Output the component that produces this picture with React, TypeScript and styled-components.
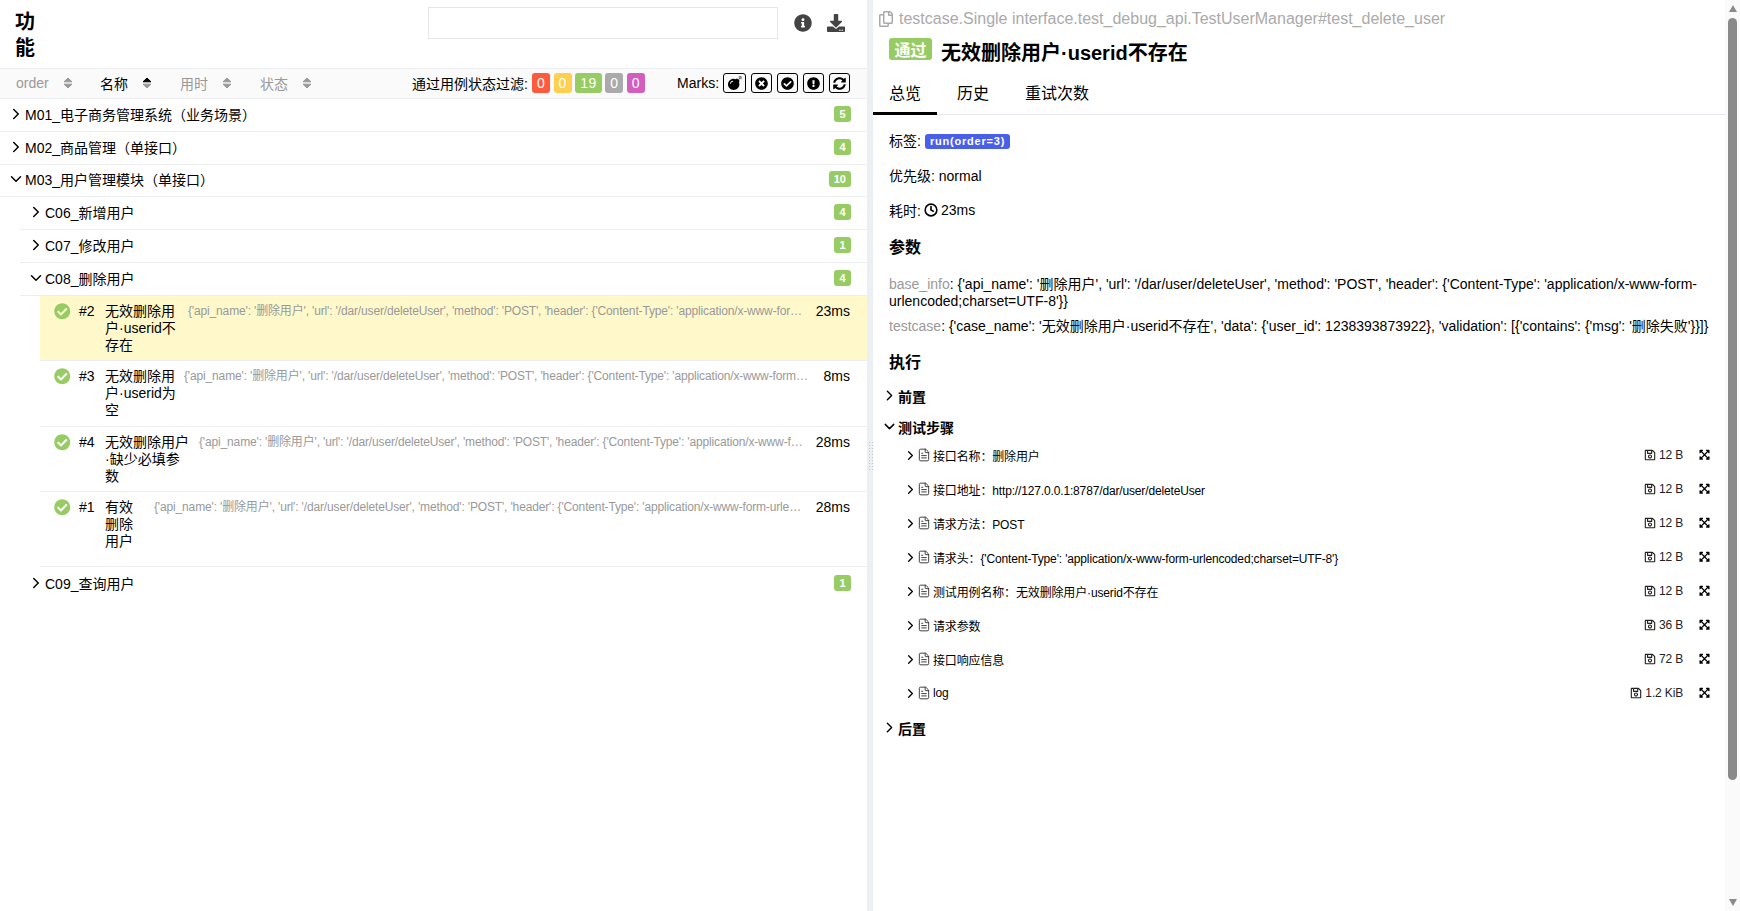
import React, { FC } from "react";
import styled, { createGlobalStyle } from "styled-components";
import { ChevronDown, ChevronRight, Clock, FileText } from "lucide-react";
import {
  FaBomb,
  FaCheckCircle,
  FaDownload,
  FaExclamationCircle,
  FaExpandArrowsAlt,
  FaInfoCircle,
  FaRegCopy,
  FaRegSave,
  FaSyncAlt,
  FaTimesCircle,
} from "react-icons/fa";

const PARAM_TEXT =
  "{'api_name': '删除用户', 'url': '/dar/user/deleteUser', 'method': 'POST', 'header': {'Content-Type': 'application/x-www-form-urlencoded;charset=UTF-8'}}";

const GlobalStyle = createGlobalStyle`
  html, body {
    margin: 0;
    height: 100%;
    overflow: hidden;
    background: #fff;
  }
  body {
    font-family: "Liberation Sans", "Noto Sans CJK SC", sans-serif;
    font-size: 14px;
    color: #000;
  }
`;

const sorters = [
  { label: "order", width: 84, active: false },
  { label: "名称", width: 80, active: true },
  { label: "用时", width: 80, active: false },
  { label: "状态", width: 80, active: false },
];

const filters = [
  { value: 0, color: "#fd5a3e" },
  { value: 0, color: "#ffd050" },
  { value: 19, color: "#97cc64" },
  { value: 0, color: "#aaaaaa" },
  { value: 0, color: "#d35ebe" },
];

const marks = [FaBomb, FaTimesCircle, FaCheckCircle, FaExclamationCircle, FaSyncAlt];

const cases = [
  { id: "#2", name: "无效删除用户·userid不存在", nameWidth: 71, gap: 12, duration: "23ms", height: 65.5, selected: true },
  { id: "#3", name: "无效删除用户·userid为空", nameWidth: 71, gap: 8, duration: "8ms", height: 65.5, selected: false },
  { id: "#4", name: "无效删除用户·缺少必填参数", nameWidth: 84, gap: 10, duration: "28ms", height: 65.5, selected: false },
  { id: "#1", name: "有效删除用户", nameWidth: 30, gap: 19, duration: "28ms", height: 75, selected: false },
];

const steps = [
  { name: "接口名称：删除用户", size: "12 B" },
  { name: "接口地址：http://127.0.0.1:8787/dar/user/deleteUser", size: "12 B" },
  { name: "请求方法：POST", size: "12 B" },
  { name: "请求头：{'Content-Type': 'application/x-www-form-urlencoded;charset=UTF-8'}", size: "12 B" },
  { name: "测试用例名称：无效删除用户·userid不存在", size: "12 B" },
  { name: "请求参数", size: "36 B" },
  { name: "接口响应信息", size: "72 B" },
  { name: "log", size: "1.2 KiB" },
];

const SortIcon: FC<{ active: boolean }> = ({ active }) => (
  <svg width="10" height="12" viewBox="0 0 10 12">
    <path d="M5 1 L9 4.8 H1 Z" fill={active ? "#000" : "#999"} stroke={active ? "#000" : "#999"} strokeLinejoin="round" />
    <path d="M5 11 L9 7.2 H1 Z" fill="#999" stroke="#999" strokeLinejoin="round" />
  </svg>
);

const Group: FC<{ label: string; count: number; open?: boolean; child?: boolean; last?: boolean }> = ({
  label,
  count,
  open,
  child,
  last,
}) => (
  <GroupRow $child={child} $last={last}>
    <Caret>{open ? <ChevronDown size={18} /> : <ChevronRight size={18} />}</Caret>
    <GroupLabel>{label}</GroupLabel>
    <CountBadge>{count}</CountBadge>
  </GroupRow>
);

const App: FC = () => {
  return (
    <Page>
      <GlobalStyle />
      <LeftPane>
        <Header>
          <PageTitle>功能</PageTitle>
          <SearchBox />
          <HeaderIcon>
            <FaInfoCircle />
          </HeaderIcon>
          <HeaderIcon>
            <FaDownload />
          </HeaderIcon>
        </Header>
        <SortBar>
          {sorters.map((s) => (
            <Sorter key={s.label} $width={s.width} $active={s.active}>
              {s.label}
              <SortIcon active={s.active} />
            </Sorter>
          ))}
          <FilterLabel>通过用例状态过滤:</FilterLabel>
          <FilterList>
            {filters.map((f) => (
              <FilterBadge key={f.color} $color={f.color}>
                {f.value}
              </FilterBadge>
            ))}
          </FilterList>
          <MarksLabel>Marks:</MarksLabel>
          <MarkList>
            {marks.map((Icon, i) => (
              <MarkButton key={i}>
                <Icon />
              </MarkButton>
            ))}
          </MarkList>
        </SortBar>
        <Group label="M01_电子商务管理系统（业务场景）" count={5} />
        <Group label="M02_商品管理（单接口）" count={4} />
        <Group label="M03_用户管理模块（单接口）" count={10} open />
        <Group label="C06_新增用户" count={4} child />
        <Group label="C07_修改用户" count={1} child />
        <Group label="C08_删除用户" count={4} child open />
        <CaseList>
          {cases.map((c) => (
            <CaseRow key={c.id} $selected={c.selected} $height={c.height}>
              <PassIcon>
                <FaCheckCircle />
              </PassIcon>
              <CaseId>{c.id}</CaseId>
              <CaseName $width={c.nameWidth}>{c.name}</CaseName>
              <CaseParams $gap={c.gap}>{PARAM_TEXT}</CaseParams>
              <CaseTime>{c.duration}</CaseTime>
            </CaseRow>
          ))}
        </CaseList>
        <Group label="C09_查询用户" count={1} child last />
      </LeftPane>

      <Splitter>
        <Grip />
      </Splitter>

      <RightPane>
        <FullName>
          <CopyIcon>
            <FaRegCopy />
          </CopyIcon>
          testcase.Single interface.test_debug_api.TestUserManager#test_delete_user
        </FullName>
        <TitleRow>
          <StatusBadge>通过</StatusBadge>
          <CaseTitle>无效删除用户·userid不存在</CaseTitle>
        </TitleRow>
        <Tabs>
          <Tab $active>总览</Tab>
          <Tab>历史</Tab>
          <Tab>重试次数</Tab>
        </Tabs>
        <Body>
          <InfoLine>
            标签: <TagBadge>run(order=3)</TagBadge>
          </InfoLine>
          <InfoLine>优先级: normal</InfoLine>
          <InfoLine>
            耗时: <Clock size={14} strokeWidth={2.8} /> 23ms
          </InfoLine>
          <SectionTitle>参数</SectionTitle>
          <ParamLine>
            <ParamKey>base_info</ParamKey>: {PARAM_TEXT}
          </ParamLine>
          <ParamLine>
            <ParamKey>testcase</ParamKey>: {"{'case_name': '无效删除用户·userid不存在', 'data': {'user_id': 1238393873922}, 'validation': [{'contains': {'msg': '删除失败'}}]}"}
          </ParamLine>
          <ExecTitle>执行</ExecTitle>
          <StageRow>
            <StageCaret><ChevronRight size={17} /></StageCaret>
            前置
          </StageRow>
          <StageRow>
            <StageCaret><ChevronDown size={17} /></StageCaret>
            测试步骤
          </StageRow>
          <StepList>
            {steps.map((s) => (
              <StepRow key={s.name}>
                <StepCaret><ChevronRight size={15} /></StepCaret>
                <StepFile><FileText size={14} strokeWidth={1.6} /></StepFile>
                <StepName>{s.name}</StepName>
                <StepSize>
                  <FaRegSave />
                  {s.size}
                </StepSize>
                <StepExpand><FaExpandArrowsAlt /></StepExpand>
              </StepRow>
            ))}
          </StepList>
          <StageRow>
            <StageCaret><ChevronRight size={17} /></StageCaret>
            后置
          </StageRow>
        </Body>
      </RightPane>

      <ScrollTrack>
        <ArrowUp />
        <ScrollThumb />
        <ArrowDown />
      </ScrollTrack>
    </Page>
  );
};

export default App;

const Page = styled.div`
  display: flex;
  width: 1740px;
  height: 911px;
  overflow: hidden;
`;

const LeftPane = styled.div`
  width: 867px;
  flex: none;
  display: flex;
  flex-direction: column;
`;

const Header = styled.div`
  height: 69px;
  box-sizing: border-box;
  flex: none;
  display: flex;
  align-items: flex-start;
  border-bottom: 1px solid #eceef1;
`;

const PageTitle = styled.h2`
  width: 20px;
  margin: 9px 0 0 15px;
  font-size: 20px;
  line-height: 26px;
  font-weight: bold;
`;

const SearchBox = styled.div`
  width: 348px;
  height: 30px;
  margin: 7px 0 0 393px;
  border: 1px solid #e4e7eb;
`;

const HeaderIcon = styled.span`
  width: 18px;
  height: 18px;
  margin: 14px 0 0 15px;
  font-size: 18px;
  color: #444;
  &:first-of-type {
    margin-left: 16px;
  }
`;

const SortBar = styled.div`
  height: 30px;
  box-sizing: border-box;
  flex: none;
  display: flex;
  align-items: center;
  padding: 0 0 1px 16px;
  background: #fafafa;
  border-bottom: 1px solid #eceef1;
`;

const Sorter = styled.div<{ $width: number; $active: boolean }>`
  width: ${(p) => p.$width}px;
  display: flex;
  align-items: center;
  gap: 14px;
  color: ${(p) => (p.$active ? "#000" : "#999")};
`;

const FilterLabel = styled.span`
  margin-left: 72px;
  white-space: nowrap;
`;

const FilterList = styled.div`
  display: flex;
  gap: 3.5px;
  margin-left: 4px;
`;

const FilterBadge = styled.span<{ $color: string }>`
  height: 20px;
  padding: 0 5px;
  display: flex;
  align-items: center;
  justify-content: center;
  border-radius: 3px;
  background: ${(p) => p.$color};
  color: #fff;
  font-size: 14px;
  letter-spacing: 0.4px;
`;

const MarksLabel = styled.span`
  margin-left: 32px;
`;

const MarkList = styled.div`
  display: flex;
  gap: 5px;
  margin-left: 4px;
`;

const MarkButton = styled.span`
  width: 19px;
  height: 18px;
  display: flex;
  align-items: center;
  justify-content: center;
  border: 1px solid #000;
  border-radius: 3px;
  font-size: 13px;
  &:first-child {
    width: 21px;
    font-size: 14px;
  }
`;

const GroupRow = styled.div<{ $child?: boolean; $last?: boolean }>`
  height: 32.8px;
  box-sizing: border-box;
  flex: none;
  display: flex;
  align-items: center;
  margin-left: ${(p) => (p.$child ? 20 : 0)}px;
  padding: 0 0 2px 10px;
  border-bottom: ${(p) => (p.$last ? "none" : "1px solid #eceef1")};
`;

const Caret = styled.span`
  width: 15px;
  height: 16px;
  display: flex;
  align-items: center;
  justify-content: center;
  margin-left: -2px;
  margin-right: 2px;
  svg {
    flex: none;
  }
`;

const GroupLabel = styled.span`
  flex: 1;
  white-space: nowrap;
`;

const CountBadge = styled.span`
  min-width: 7px;
  height: 16px;
  margin-right: 16px;
  padding: 0 5px;
  display: flex;
  align-items: center;
  justify-content: center;
  border-radius: 3px;
  background: #97cc64;
  color: #fff;
  font-size: 11px;
  font-weight: bold;
`;

const CaseList = styled.div`
  margin-left: 40px;
  flex: none;
`;

const CaseRow = styled.div<{ $selected: boolean; $height: number }>`
  height: ${(p) => p.$height}px;
  box-sizing: border-box;
  display: flex;
  align-items: flex-start;
  padding-top: 7px;
  background: ${(p) => (p.$selected ? "#fff8cb" : "#fff")};
  border-bottom: 1px solid #eceef1;
  line-height: 17px;
`;

const PassIcon = styled.span`
  width: 16px;
  height: 16px;
  margin-left: 14px;
  font-size: 16.5px;
  color: #97cc64;
  line-height: 16px;
`;

const CaseId = styled.span`
  width: 26px;
  margin-left: 9px;
`;

const CaseName = styled.span<{ $width: number }>`
  width: ${(p) => p.$width}px;
  flex: none;
  word-break: break-all;
`;

const CaseParams = styled.span<{ $gap: number }>`
  flex: 1;
  min-width: 0;
  margin-left: ${(p) => p.$gap}px;
  color: #999;
  font-size: 12px;
  letter-spacing: -0.15px;
  white-space: nowrap;
  overflow: hidden;
  text-overflow: ellipsis;
`;

const CaseTime = styled.span`
  flex: none;
  margin: 0 17px 0 13px;
  text-align: right;
`;

const Splitter = styled.div`
  width: 6px;
  flex: none;
  display: flex;
  align-items: center;
  justify-content: center;
  background: #ecf0f3;
`;

const Grip = styled.div`
  width: 5px;
  height: 30px;
  background-image: radial-gradient(#bfc4c9 1px, transparent 1px);
  background-size: 3px 3px;
`;

const RightPane = styled.div`
  flex: 1;
  min-width: 0;
  display: flex;
  flex-direction: column;
`;

const FullName = styled.div`
  display: flex;
  align-items: center;
  height: 18px;
  margin: 10px 0 0 5px;
  font-size: 16px;
  color: #aaa;
  white-space: nowrap;
`;

const CopyIcon = styled.span`
  display: flex;
  margin-right: 5px;
  font-size: 16px;
`;

const TitleRow = styled.div`
  display: flex;
  align-items: center;
  margin: 8px 0 0 16px;
  height: 30px;
`;

const StatusBadge = styled.span`
  width: 43px;
  height: 22px;
  display: flex;
  align-items: center;
  justify-content: center;
  margin-top: -4px;
  border-radius: 3px;
  background: #97cc64;
  color: #fff;
  font-size: 16px;
  font-weight: bold;
`;

const CaseTitle = styled.h2`
  margin: 0 0 0 9px;
  font-size: 20px;
  font-weight: bold;
`;

const Tabs = styled.div`
  display: flex;
  height: 44px;
  box-sizing: border-box;
  margin-top: 5px;
  border-bottom: 1px solid #e4e7eb;
`;

const Tab = styled.div<{ $active?: boolean }>`
  height: 44px;
  box-sizing: border-box;
  padding: 12px 16px 0;
  margin-right: 4px;
  font-size: 16px;
  border-bottom: ${(p) => (p.$active ? "3px solid #000" : "none")};
  line-height: 22px;
`;

const Body = styled.div`
  padding: 0 11px 0 16px;
  display: flex;
  flex-direction: column;
`;

const InfoLine = styled.div`
  height: 35.4px;
  display: flex;
  align-items: center;
  gap: 3px;
  &:first-child {
    margin-top: 7px;
  }
`;

const TagBadge = styled.span`
  display: inline-block;
  margin: 4px 0 0 1px;
  padding: 0 5px;
  height: 15px;
  line-height: 15px;
  border-radius: 3px;
  background: #4a5fe8;
  color: #fff;
  font-size: 11px;
  font-weight: bold;
  letter-spacing: 0.8px;
`;

const SectionTitle = styled.h3`
  margin: 9px 0 17px;
  font-size: 16px;
  line-height: 22px;
`;

const ExecTitle = styled(SectionTitle)`
  margin: 9px 0 6px;
`;

const ParamLine = styled.div`
  line-height: 17px;
  margin-bottom: 8px;
  padding-right: 5px;
`;

const ParamKey = styled.span`
  color: #999;
`;

const StageRow = styled.div`
  height: 31px;
  flex: none;
  display: flex;
  align-items: center;
  font-weight: bold;
  margin-left: -3px;
`;

const StageCaret = styled.span`
  display: flex;
  justify-content: center;
  width: 10px;
  margin: 0 4px 0 -2px;
  svg {
    flex: none;
  }
`;

const StepList = styled.div`
  display: flex;
  flex-direction: column;
  margin: -4px 0 2px;
`;

const StepRow = styled.div`
  height: 34px;
  flex: none;
  display: flex;
  align-items: center;
  padding-left: 14px;
  font-size: 12px;
`;

const StepCaret = styled.span`
  display: flex;
  justify-content: center;
  width: 14px;
  svg {
    flex: none;
  }
`;

const StepFile = styled.span`
  display: flex;
  width: 16px;
  color: #333;
`;

const StepName = styled.span`
  flex: 1;
  letter-spacing: -0.15px;
`;

const StepSize = styled.span`
  display: flex;
  align-items: center;
  gap: 3px;
  color: #222;
  letter-spacing: -0.15px;
  svg {
    font-size: 12px;
  }
`;

const StepExpand = styled.span`
  display: flex;
  width: 11px;
  margin: 0 4px 0 16px;
  font-size: 11.5px;
`;

const ScrollTrack = styled.div`
  width: 15px;
  flex: none;
  display: flex;
  flex-direction: column;
  align-items: center;
  background: #fafafa;
`;

const ArrowUp = styled.div`
  width: 0;
  height: 0;
  margin-top: 5px;
  border: 4.5px solid transparent;
  border-top: 0;
  border-bottom: 7px solid #8a8a8a;
`;

const ScrollThumb = styled.div`
  width: 9px;
  height: 762px;
  margin-top: 6px;
  border-radius: 5px;
  background: #8a8a8a;
`;

const ArrowDown = styled.div`
  width: 0;
  height: 0;
  margin-top: auto;
  margin-bottom: 5px;
  border: 4.5px solid transparent;
  border-bottom: 0;
  border-top: 7px solid #8a8a8a;
`;
